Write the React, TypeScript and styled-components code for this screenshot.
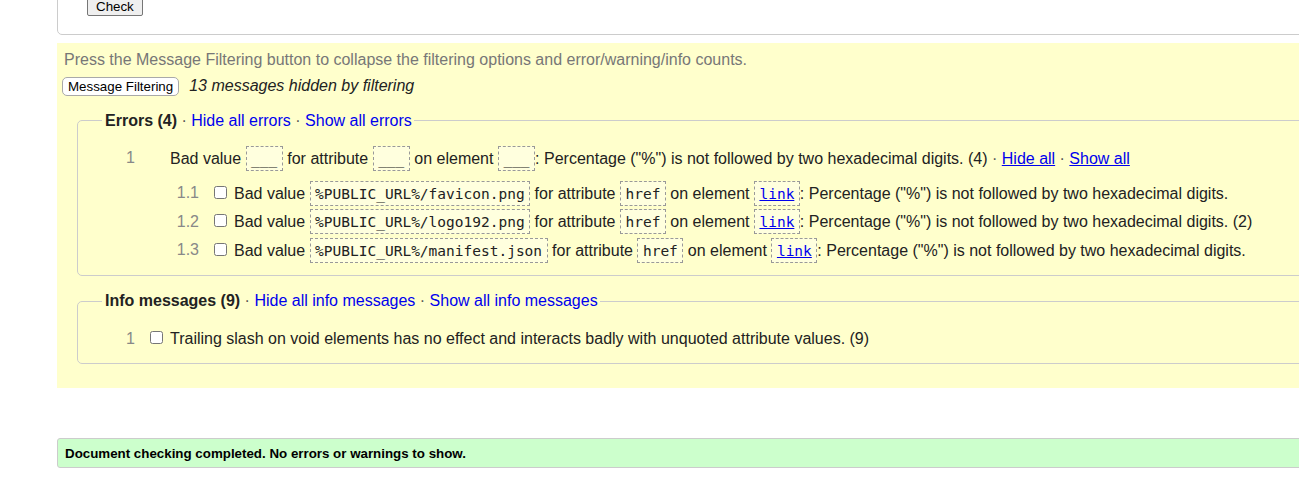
import React from "react";
import styled, { createGlobalStyle } from "styled-components";

const Global = createGlobalStyle`
  html, body {
    margin: 0;
    padding: 0;
    overflow: hidden;
    background: #fff;
  }
  body {
    font-family: "Liberation Sans", Arial, sans-serif;
    font-size: 16px;
    color: #222;
  }
`;

const Page = styled.div`
  padding-left: 57px;
  width: 1300px;
`;

const FormBox = styled.div`
  margin-top: -10px;
  padding: 6px 0 18px 29px;
  border: 1px solid #ccc;
  border-radius: 5px;
`;

const CheckButton = styled.button`
  font-family: "Liberation Sans", Arial, sans-serif;
  font-size: 13.33px;
  height: 19px;
  padding: 0 8px;
  background: #efefef;
  border: 1px solid #767676;
  border-radius: 2px;
  color: #000;
  line-height: 15px;
`;

const FilterPanel = styled.section`
  margin-top: 8px;
  background: #ffffcc;
  padding: 7.5px 0 24px 5px;
`;

const Hint = styled.p`
  margin: 0;
  padding-left: 2px;
  color: #777;
  line-height: normal;
`;

const FilterBar = styled.div`
  display: flex;
  align-items: center;
  gap: 10px;
  margin-top: 8px;
`;

const FilterButton = styled.button`
  font-family: "Liberation Sans", Arial, sans-serif;
  font-size: 13.33px;
  height: 19px;
  padding: 0 5px;
  background: #fff;
  border: 1px solid #a9a9a9;
  border-radius: 5px;
  color: #000;
  line-height: 15px;
`;

const HiddenNote = styled.em`
  color: #222;
`;

const Group = styled.fieldset<{ $top: number }>`
  margin: ${(p) => p.$top}px 0 0 15px;
  padding: 16px 0 12px 24px;
  border: 1px solid #ccc;
  border-radius: 5px;
  min-width: 0;
`;

const Legend = styled.legend`
  padding: 0 2px 0 3px;
  line-height: normal;
`;

const Strong = styled.b`
  font-weight: bold;
  color: #222;
`;

const Sep = styled.span`
  color: #555;
`;

const Link = styled.a<{ $under?: boolean }>`
  color: #0000ee;
  text-decoration: ${(p) => (p.$under ? "underline" : "none")};
  cursor: pointer;
`;

const Rows = styled.div<{ $gap: number }>`
  display: flex;
  flex-direction: column;
  gap: ${(p) => p.$gap}px;
`;

const Row = styled.div<{ $level: number }>`
  display: flex;
  align-items: center;
  min-height: 25px;
  padding-left: ${(p) => p.$level * 64}px;
  white-space: nowrap;
`;

const Num = styled.span`
  width: 33px;
  flex-shrink: 0;
  text-align: right;
  color: #888;
`;

const CheckSlot = styled.span`
  width: 35px;
  flex-shrink: 0;
  display: flex;
  align-items: center;
  padding-left: 15px;
  box-sizing: border-box;
`;

const Box = styled.input.attrs({ type: "checkbox" })`
  appearance: none;
  width: 13px;
  height: 13px;
  margin: 0 0 2px 0;
  border: 1px solid #767676;
  border-radius: 2.5px;
  background: #fff;
  box-sizing: border-box;
`;

const MsgText = styled.span`
  line-height: normal;
`;

const Code = styled.code`
  display: inline-block;
  font-family: "DejaVu Sans Mono", "Liberation Mono", monospace;
  font-size: 14.5px;
  line-height: 17px;
  padding: 4px 4.5px 2px;
  border: 1px dashed #999;
  background: rgba(255, 255, 255, 0.35);
  color: #222;
  vertical-align: baseline;
`;

const Done = styled.div`
  margin-top: 50px;
  padding: 6.5px 7px;
  border: 1px solid #ccc;
  border-radius: 3px;
  background: #ccffcc;
  font-size: 13.33px;
  font-weight: bold;
  color: #000;
  line-height: normal;
`;

type Sub = { n: string; value: string; note?: string };

const subs: Sub[] = [
  { n: "1.1", value: "%PUBLIC_URL%/favicon.png" },
  { n: "1.2", value: "%PUBLIC_URL%/logo192.png", note: " (2)" },
  { n: "1.3", value: "%PUBLIC_URL%/manifest.json" },
];

export default function App() {
  return (
    <>
      <Global />
      <Page>
        <FormBox>
          <CheckButton>Check</CheckButton>
        </FormBox>
        <FilterPanel>
          <Hint>
            Press the Message Filtering button to collapse the filtering options and error/warning/info counts.
          </Hint>
          <FilterBar>
            <FilterButton>Message Filtering</FilterButton>
            <HiddenNote>13 messages hidden by filtering</HiddenNote>
          </FilterBar>

          <Group $top={16}>
            <Legend>
              <Strong>Errors (4)</Strong>
              <Sep> · </Sep>
              <Link>Hide all errors</Link>
              <Sep> · </Sep>
              <Link>Show all errors</Link>
            </Legend>
            <Rows $gap={10}>
              <Row $level={0}>
                <Num>1</Num>
                <CheckSlot />
                <MsgText>
                  Bad value <Code>___</Code> for attribute <Code>___</Code> on element{" "}
                  <Code>___</Code>: Percentage ("%") is not followed by two hexadecimal digits. (4)
                  <Sep> · </Sep>
                  <Link $under>Hide all</Link>
                  <Sep> · </Sep>
                  <Link $under>Show all</Link>
                </MsgText>
              </Row>
              <Rows $gap={3.5}>
                {subs.map((s) => (
                  <Row $level={1} key={s.n}>
                    <Num>{s.n}</Num>
                    <CheckSlot>
                      <Box />
                    </CheckSlot>
                    <MsgText>
                      Bad value <Code>{s.value}</Code> for attribute <Code>href</Code> on element{" "}
                      <Code>
                        <Link $under>link</Link>
                      </Code>
                      : Percentage ("%") is not followed by two hexadecimal digits.{s.note ?? ""}
                    </MsgText>
                  </Row>
                ))}
              </Rows>
            </Rows>
          </Group>

          <Group $top={16.5}>
            <Legend>
              <Strong>Info messages (9)</Strong>
              <Sep> · </Sep>
              <Link>Hide all info messages</Link>
              <Sep> · </Sep>
              <Link>Show all info messages</Link>
            </Legend>
            <Row $level={0}>
              <Num>1</Num>
              <CheckSlot>
                <Box />
              </CheckSlot>
              <MsgText>
                Trailing slash on void elements has no effect and interacts badly with unquoted attribute values. (9)
              </MsgText>
            </Row>
          </Group>
        </FilterPanel>
        <Done>Document checking completed. No errors or warnings to show.</Done>
      </Page>
    </>
  );
}
